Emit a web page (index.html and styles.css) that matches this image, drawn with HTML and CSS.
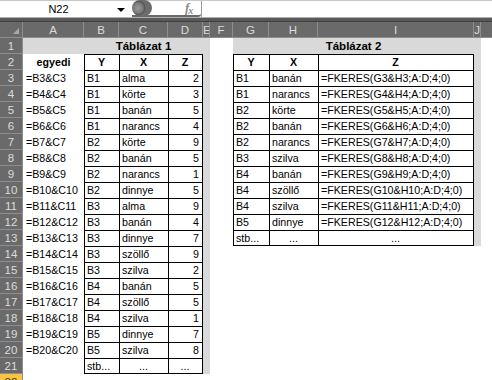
FILE: index.html
```html
<!DOCTYPE html>
<html>
<head>
<meta charset="utf-8">
<link rel="stylesheet" href="styles.css">
</head>
<body>
<div class="fbar">
  <div class="namebox"><span class="nbtext">N22</span><span class="arrow"></span></div>
  <div class="mid"><span class="knob"></span><span class="fx">f<i>x</i></span></div>
  <div class="finput"></div>
</div>
<div class="band"></div>
<div class="sheet">
  <div class="corner"><span class="tri"></span></div>
  <div class="ch">A</div><div class="ch">B</div><div class="ch">C</div><div class="ch">D</div><div class="ch">E</div><div class="ch">F</div><div class="ch">G</div><div class="ch">H</div><div class="ch">I</div><div class="ch">J</div><div class="ch last"></div>

  <div class="rh">1</div><div class="g"></div><div class="g title span3">Táblázat 1</div><div class="g"></div><div></div><div class="g title span3">Táblázat 2</div><div class="g"></div><div></div>

  <div class="rh">2</div><div class="b c">egyedi</div><div class="t b c">Y</div><div class="t b c">X</div><div class="t tr b c">Z</div><div class="g"></div><div></div><div class="t b c">Y</div><div class="t b c">X</div><div class="t tr b c">Z</div><div class="g"></div><div></div>

  <div class="rh">3</div><div>=B3&amp;C3</div><div class="t">B1</div><div class="t">alma</div><div class="t tr r">2</div><div class="g"></div><div></div><div class="t">B1</div><div class="t">banán</div><div class="t tr">=FKERES(G3&amp;H3;A:D;4;0)</div><div class="g"></div><div></div>

  <div class="rh">4</div><div>=B4&amp;C4</div><div class="t">B1</div><div class="t">körte</div><div class="t tr r">3</div><div class="g"></div><div></div><div class="t">B1</div><div class="t">narancs</div><div class="t tr">=FKERES(G4&amp;H4;A:D;4;0)</div><div class="g"></div><div></div>

  <div class="rh">5</div><div>=B5&amp;C5</div><div class="t">B1</div><div class="t">banán</div><div class="t tr r">5</div><div class="g"></div><div></div><div class="t">B2</div><div class="t">körte</div><div class="t tr">=FKERES(G5&amp;H5;A:D;4;0)</div><div class="g"></div><div></div>

  <div class="rh">6</div><div>=B6&amp;C6</div><div class="t">B1</div><div class="t">narancs</div><div class="t tr r">4</div><div class="g"></div><div></div><div class="t">B2</div><div class="t">banán</div><div class="t tr">=FKERES(G6&amp;H6;A:D;4;0)</div><div class="g"></div><div></div>

  <div class="rh">7</div><div>=B7&amp;C7</div><div class="t">B2</div><div class="t">körte</div><div class="t tr r">9</div><div class="g"></div><div></div><div class="t">B2</div><div class="t">narancs</div><div class="t tr">=FKERES(G7&amp;H7;A:D;4;0)</div><div class="g"></div><div></div>

  <div class="rh">8</div><div>=B8&amp;C8</div><div class="t">B2</div><div class="t">banán</div><div class="t tr r">5</div><div class="g"></div><div></div><div class="t">B3</div><div class="t">szilva</div><div class="t tr">=FKERES(G8&amp;H8;A:D;4;0)</div><div class="g"></div><div></div>

  <div class="rh">9</div><div>=B9&amp;C9</div><div class="t">B2</div><div class="t">narancs</div><div class="t tr r">1</div><div class="g"></div><div></div><div class="t">B4</div><div class="t">banán</div><div class="t tr">=FKERES(G9&amp;H9;A:D;4;0)</div><div class="g"></div><div></div>

  <div class="rh">10</div><div>=B10&amp;C10</div><div class="t">B2</div><div class="t">dinnye</div><div class="t tr r">5</div><div class="g"></div><div></div><div class="t">B4</div><div class="t">szöllő</div><div class="t tr">=FKERES(G10&amp;H10;A:D;4;0)</div><div class="g"></div><div></div>

  <div class="rh">11</div><div>=B11&amp;C11</div><div class="t">B3</div><div class="t">alma</div><div class="t tr r">9</div><div class="g"></div><div></div><div class="t">B4</div><div class="t">szilva</div><div class="t tr">=FKERES(G11&amp;H11;A:D;4;0)</div><div class="g"></div><div></div>

  <div class="rh">12</div><div>=B12&amp;C12</div><div class="t">B3</div><div class="t">banán</div><div class="t tr r">4</div><div class="g"></div><div></div><div class="t">B5</div><div class="t">dinnye</div><div class="t tr">=FKERES(G12&amp;H12;A:D;4;0)</div><div class="g"></div><div></div>

  <div class="rh">13</div><div>=B13&amp;C13</div><div class="t">B3</div><div class="t">dinnye</div><div class="t tr r">7</div><div class="g"></div><div></div><div class="t tb">stb...</div><div class="t tb c">...</div><div class="t tr tb c">...</div><div class="g"></div><div></div>

  <div class="rh">14</div><div>=B14&amp;C14</div><div class="t">B3</div><div class="t">szöllő</div><div class="t tr r">9</div><div class="g"></div><div></div><div></div><div></div><div></div><div></div><div></div>

  <div class="rh">15</div><div>=B15&amp;C15</div><div class="t">B3</div><div class="t">szilva</div><div class="t tr r">2</div><div class="g"></div><div></div><div></div><div></div><div></div><div></div><div></div>

  <div class="rh">16</div><div>=B16&amp;C16</div><div class="t">B4</div><div class="t">banán</div><div class="t tr r">5</div><div class="g"></div><div></div><div></div><div></div><div></div><div></div><div></div>

  <div class="rh">17</div><div>=B17&amp;C17</div><div class="t">B4</div><div class="t">szöllő</div><div class="t tr r">5</div><div class="g"></div><div></div><div></div><div></div><div></div><div></div><div></div>

  <div class="rh">18</div><div>=B18&amp;C18</div><div class="t">B4</div><div class="t">szilva</div><div class="t tr r">1</div><div class="g"></div><div></div><div></div><div></div><div></div><div></div><div></div>

  <div class="rh">19</div><div>=B19&amp;C19</div><div class="t">B5</div><div class="t">dinnye</div><div class="t tr r">7</div><div class="g"></div><div></div><div></div><div></div><div></div><div></div><div></div>

  <div class="rh">20</div><div>=B20&amp;C20</div><div class="t">B5</div><div class="t">szilva</div><div class="t tr r">8</div><div class="g"></div><div></div><div></div><div></div><div></div><div></div><div></div>

  <div class="rh">21</div><div></div><div class="t tb">stb...</div><div class="t tb c">...</div><div class="t tr tb c">...</div><div class="g"></div><div></div><div></div><div></div><div></div><div></div><div></div>

  <div class="rh sel">22</div><div></div><div></div><div></div><div></div><div></div><div></div><div></div><div></div><div></div><div></div><div></div>
</div>
</body>
</html>
```
FILE: styles.css
```css
html, body {
  margin: 0;
  padding: 0;
  background: #fff;
  overflow: hidden;
}
body {
  width: 492px;
  height: 380px;
  font-family: "Liberation Sans", Arial, sans-serif;
  font-size: 10.67px;
  color: #000;
}
.fbar {
  display: flex;
  height: 17px;
  background: #fff;
  border-top: 1px solid #c8c8c8;
  box-sizing: border-box;
}
.namebox {
  width: 132px;
  display: flex;
  align-items: center;
  font-size: 11px;
}
.nbtext {
  width: 117px;
  text-align: center;
}
.arrow {
  width: 0;
  height: 0;
  border-left: 4px solid transparent;
  border-right: 4px solid transparent;
  border-top: 4px solid #000;
  margin-top: 2px;
}
.mid {
  width: 69px;
  display: flex;
  align-items: center;
  position: relative;
  border-bottom: 2px solid #6a6a6a;
  border-bottom-right-radius: 3px;
  box-sizing: border-box;
}
.knob {
  width: 20px;
  height: 16px;
  border-radius: 8px;
  background: radial-gradient(circle at 6px 8px, #9a9a9a 0, #7a7a7a 5px, #555 7px, #6e6e6e 8px, #666 100%);
  margin-left: 0;
}
.fx {
  margin-left: 33px;
  font-family: "Liberation Serif", serif;
  font-style: italic;
  font-size: 13px;
  color: #8a8a8a;
  font-weight: bold;
  letter-spacing: -1px;
}
.fx i {
  font-size: 10px;
  position: relative;
  top: 2px;
}
.finput {
  flex: 1;
  border-left: 1px solid #9a9a9a;
}
.band {
  height: 5px;
  background: #5a5a5a;
  border-top: 1px solid #b0b0b0;
  border-bottom: 1px solid #3e3e3e;
  box-sizing: border-box;
}
.sheet {
  display: grid;
  grid-template-columns: 23px 61px 35px 49px 35px 7px 23px 36px 49px 156px 7px 1fr;
  grid-auto-rows: 16px;
}
.sheet > div {
  box-sizing: border-box;
  line-height: 16px;
  white-space: nowrap;
  overflow: hidden;
  padding: 0 3px;
}
.corner {
  background: #6a6a6a;
  border-right: 1px solid #8e8e8e;
  border-bottom: 1px solid #8e8e8e;
  position: relative;
}
.tri {
  position: absolute;
  right: 3px;
  bottom: 3px;
  width: 0;
  height: 0;
  border-left: 6px solid transparent;
  border-bottom: 6px solid #a8a8a8;
}
.sheet > .ch {
  background: #6a6a6a;
  color: #dcdcdc;
  text-align: center;
  font-size: 11.5px;
  border-right: 1px solid #8e8e8e;
  border-bottom: 1px solid #8e8e8e;
  padding: 0;
}
.sheet > .ch.last {
  border-right: none;
}
.sheet > .rh {
  background: #6a6a6a;
  color: #dcdcdc;
  text-align: center;
  font-size: 11.5px;
  border-right: 1px solid #8e8e8e;
  border-bottom: 1px solid #8e8e8e;
  padding: 0;
}
.sheet > .rh.sel {
  background: #f8c444;
  color: #5a4000;
}
.g {
  background: #d9d9d9;
}
.span3 {
  grid-column: span 3;
}
.title {
  font-weight: bold;
  text-align: center;
  font-size: 11.5px;
}
.sheet > .t {
  border-left: 1px solid #000;
  border-top: 1px solid #000;
  line-height: 15px;
  padding-left: 2px;
}
.sheet > .tr {
  border-right: 1px solid #000;
}
.sheet > .tb {
  border-bottom: 1px solid #000;
}
.b {
  font-weight: bold;
}
.sheet > .c {
  text-align: center;
}
.sheet > .r {
  text-align: right;
  padding-right: 3px;
}
```
